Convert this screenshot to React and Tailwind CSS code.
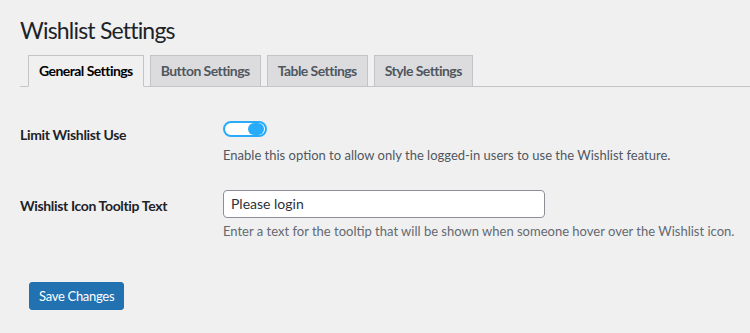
export default function App() {
  const font = { fontFamily: 'Lato, "Noto Sans", sans-serif' };
  const tab = "ml-[6px] -mb-px border border-[#c3c4c7] bg-[#dcdcde] px-[10px] py-[3px] text-[14px] leading-[24px] font-bold tracking-[-0.55px] text-[#50575e]";
  return (
    <div className="min-h-[333px] w-[750px] bg-[#f0f0f1] text-[#3c434a] overflow-hidden" style={font}>
      <div className="pl-5 pt-[15px]">
        <h1 className="text-[23px] leading-[30px] font-normal tracking-[-0.8px] text-[#1d2327]">Wishlist Settings</h1>
        <div className="mt-[10px] flex border-b border-[#c3c4c7] pl-[7px]">
          <div className="ml-[1px] -mb-px border border-[#c3c4c7] border-b-[#f0f0f1] bg-[#f0f0f1] px-[10px] py-[3px] text-[14px] leading-[24px] font-bold tracking-[-0.55px] text-[#000]">General Settings</div>
          <div className={tab}>Button Settings</div>
          <div className={tab}>Table Settings</div>
          <div className={tab}>Style Settings</div>
        </div>
        <div className="mt-[34px] flex">
          <div className="w-[203px] pt-[2px] text-[14px] leading-[24px] font-bold tracking-[-0.35px] text-[#1d2327]">Limit Wishlist Use</div>
          <div className="flex flex-col">
            <div className="relative h-[16px] w-[44px] rounded-full border-2 border-[#28acfa] bg-white">
              <div className="absolute right-[1px] top-[0px] h-[12px] w-[16px] rounded-full bg-[#28acfa]"></div>
            </div>
            <div className="mt-[8px] text-[13px] leading-[20px] text-[#50575e]">Enable this option to allow only the logged-in users to use the Wishlist feature.</div>
          </div>
        </div>
        <div className="mt-[25px] flex">
          <div className="w-[203px] pt-[4px] text-[14px] leading-[24px] font-bold tracking-[-0.35px] text-[#1d2327]">Wishlist Icon Tooltip Text</div>
          <div className="flex flex-col">
            <div className="h-[28px] w-[322px] rounded-[4px] border border-[#8c8f94] bg-white px-[7px] text-[14px] leading-[26px] text-[#2c3338]">Please login</div>
            <div className="mt-[3px] whitespace-nowrap text-[13px] leading-[20px] text-[#646970]">Enter a text for the tooltip that will be shown when someone hover over the Wishlist icon.</div>
          </div>
        </div>
        <div className="mt-[41px] pl-[9px]">
          <div className="inline-block h-[28px] rounded-[3px] border border-[#2271b1] bg-[#2271b1] px-[9px] text-[13px] leading-[26px] tracking-[-0.3px] text-white">Save Changes</div>
        </div>
      </div>
    </div>
  );
}
